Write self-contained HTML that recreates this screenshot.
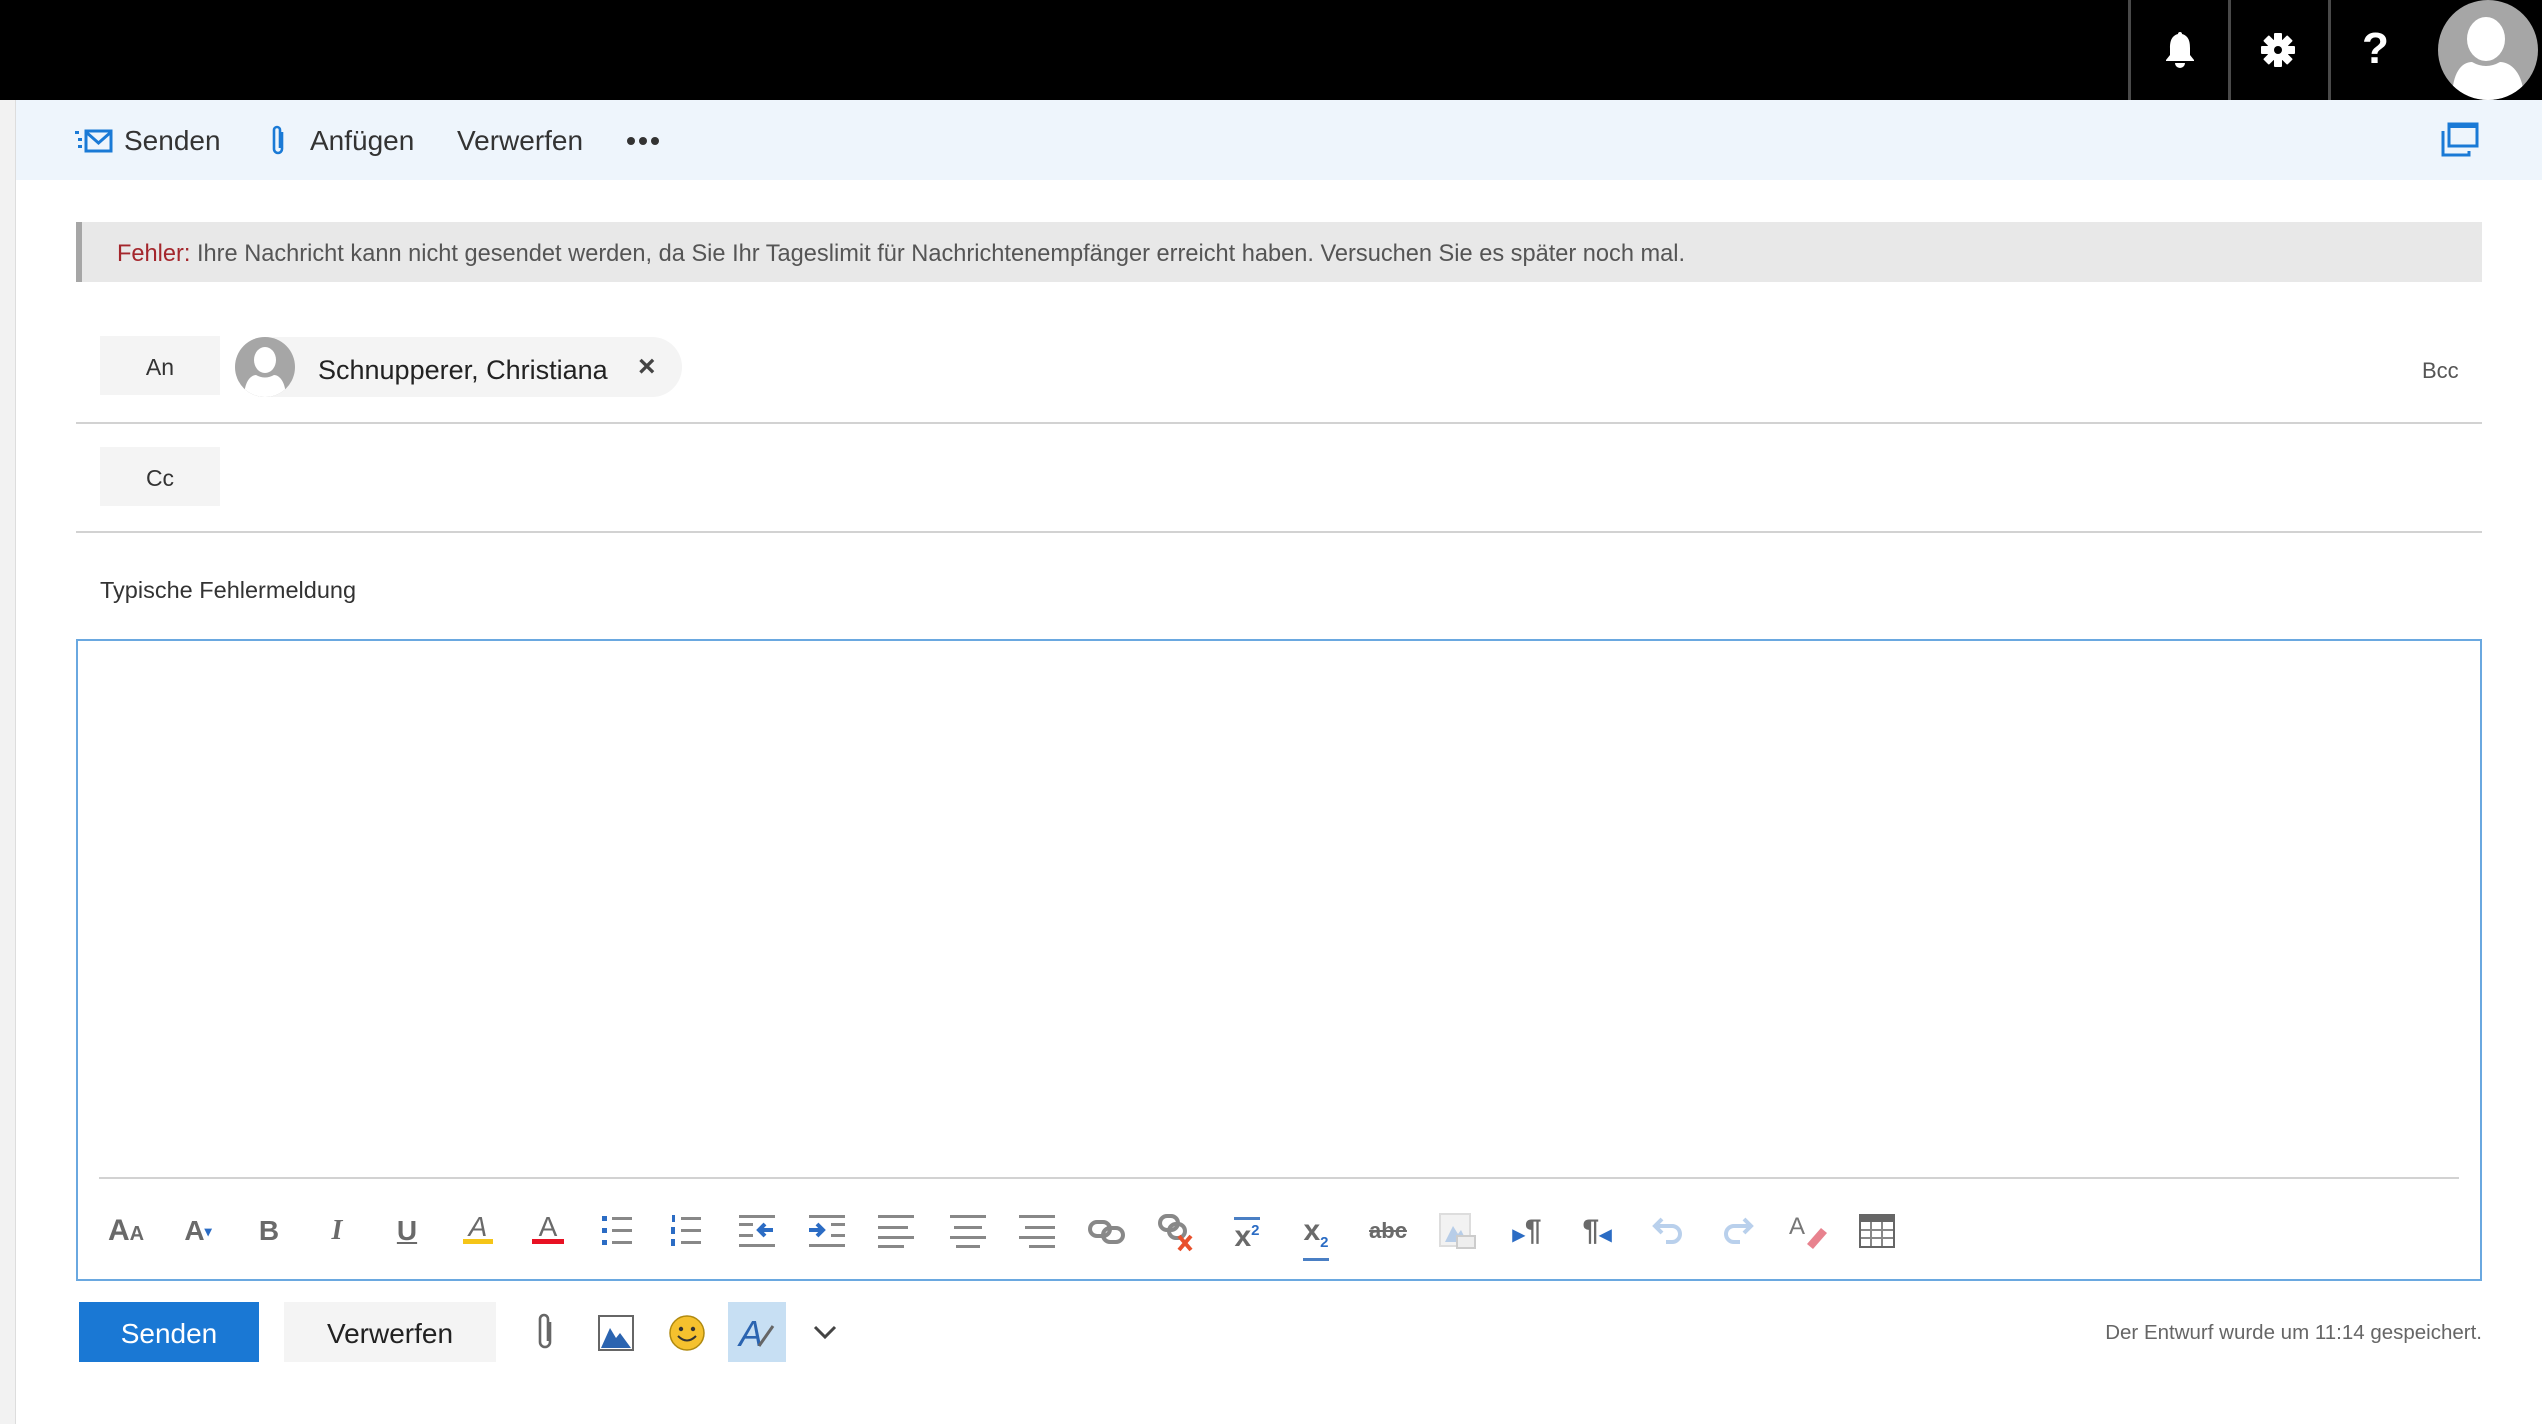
<!DOCTYPE html>
<html><head><meta charset="utf-8"><style>
*{margin:0;padding:0;box-sizing:border-box}
body{width:2542px;height:1424px;position:relative;background:#fff;font-family:"Liberation Sans",sans-serif;color:#333;overflow:hidden}
.a{position:absolute}
.top{left:0;top:0;width:2542px;height:100px;background:#000}
.sep{top:0;width:3px;height:100px;background:#4a4a4a}
.tb{left:16px;top:100px;width:2526px;height:80px;background:#eef5fc}
.side{left:0;top:100px;width:16px;height:1324px;background:#f2f2f2;border-right:1px solid #ddd}
.t{white-space:nowrap}
.line{height:2px;background:#d2d2d2}
.lbl{background:#f4f4f4;font-size:23px;color:#333;display:flex;align-items:center;justify-content:center;padding-top:3px}
.ic{top:1212px;width:40px;height:38px;font-size:28px;color:#6a6a6a;text-align:center;line-height:38px;font-weight:bold}
</style></head><body>
<div class="a top"></div>
<div class="a sep" style="left:2128px"></div>
<div class="a sep" style="left:2228px"></div>
<div class="a sep" style="left:2328px"></div>
<svg class="a" style="left:2162px;top:30px" width="36" height="40" viewBox="0 0 36 40"><path d="M18 2c-1.5 0-2 1-2 2C9 6 8 12 8 18v7l-4 5v1h28v-1l-4-5v-7c0-6-1-12-8-14 0-1-.5-2-2-2z" fill="#fff"/><path d="M13 33a5 5 0 0 0 10 0z" fill="#fff"/></svg>
<svg class="a" style="left:2260px;top:32px" width="36" height="36" viewBox="-18 -18 36 36"><g fill="#fff"><circle r="11"/><rect x="-4" y="-17" width="8" height="34" rx="1"/><rect x="-4" y="-17" width="8" height="34" rx="1" transform="rotate(45)"/><rect x="-4" y="-17" width="8" height="34" rx="1" transform="rotate(90)"/><rect x="-4" y="-17" width="8" height="34" rx="1" transform="rotate(135)"/></g><circle r="4" fill="#000"/></svg>
<div class="a t" style="left:2362px;top:24px;font-size:44px;font-weight:bold;color:#fff">?</div>
<svg class="a" style="left:2438px;top:0" width="100" height="100" viewBox="0 0 100 100"><defs><clipPath id="c"><circle cx="50" cy="50" r="50"/></clipPath></defs><circle cx="50" cy="50" r="50" fill="#a6a6a6"/><g clip-path="url(#c)" fill="#fff"><ellipse cx="48" cy="39" rx="19" ry="22"/><path d="M14 100C14 72 24 62 34 62q14 8 28 0c10 0 24 10 24 38z"/></g></svg>
<div class="a side"></div>
<div class="a tb"></div>
<svg class="a" style="left:75px;top:128px" width="38" height="26" viewBox="0 0 38 26"><g fill="#1a7ad6"><rect x="0" y="3" width="4" height="3"/><rect x="3" y="10" width="4" height="3"/><rect x="3" y="17" width="4" height="3"/></g><rect x="11" y="3" width="25" height="20" fill="none" stroke="#1a7ad6" stroke-width="3"/><path d="M11 4l12.5 11L36 4" fill="none" stroke="#1a7ad6" stroke-width="3"/></svg>
<div class="a t" style="left:124px;top:125px;font-size:28px;color:#333">Senden</div>
<svg class="a" style="left:270px;top:124px" width="16" height="34" viewBox="0 0 16 34"><path d="M12 8v17a4 4 0 0 1-8 0V6a3 3 0 0 1 6 0v18" fill="none" stroke="#1a7ad6" stroke-width="2.6"/></svg>
<div class="a t" style="left:310px;top:125px;font-size:28px;color:#333">Anfügen</div>
<div class="a t" style="left:457px;top:125px;font-size:28px;color:#333">Verwerfen</div>
<svg class="a" style="left:626px;top:135px" width="34" height="12"><circle cx="5" cy="6" r="4" fill="#333"/><circle cx="17" cy="6" r="4" fill="#333"/><circle cx="29" cy="6" r="4" fill="#333"/></svg>
<svg class="a" style="left:2440px;top:122px" width="40" height="36" viewBox="0 0 40 36"><rect x="9" y="2" width="28" height="22" fill="none" stroke="#1a7ad6" stroke-width="3"/><rect x="9" y="1" width="29" height="5" fill="#1a7ad6"/><path d="M3 9v24h26v-4" fill="none" stroke="#1a7ad6" stroke-width="3"/></svg>
<div class="a" style="left:76px;top:222px;width:2406px;height:60px;background:#e8e8e8;border-left:6px solid #a6a6a6"></div>
<div class="a t" style="left:117px;top:241px;font-size:23.6px;color:#555"><span style="color:#a4262c">Fehler:</span> Ihre Nachricht kann nicht gesendet werden, da Sie Ihr Tageslimit für Nachrichtenempfänger erreicht haben. Versuchen Sie es später noch mal.</div>
<div class="a lbl" style="left:100px;top:336px;width:120px;height:59px">An</div>
<div class="a" style="left:235px;top:337px;width:447px;height:60px;background:#f4f4f4;border-radius:30px"></div>
<svg class="a" style="left:235px;top:337px" width="60" height="60" viewBox="0 0 60 60"><defs><clipPath id="d"><circle cx="30" cy="30" r="30"/></clipPath></defs><circle cx="30" cy="30" r="30" fill="#a6a6a6"/><g clip-path="url(#d)" fill="#fff"><ellipse cx="30" cy="23" rx="11" ry="13"/><path d="M9 62C9 44 16 38 21 38q9 5 18 0c5 0 12 6 12 24z"/></g></svg>
<div class="a t" style="left:318px;top:355px;font-size:27px;color:#222">Schnupperer, Christiana</div>
<div class="a t" style="left:638px;top:350px;font-size:30px;color:#444;font-weight:bold">×</div>
<div class="a t" style="left:2422px;top:358px;font-size:22px;color:#555">Bcc</div>
<div class="a line" style="left:76px;top:422px;width:2406px"></div>
<div class="a lbl" style="left:100px;top:447px;width:120px;height:59px">Cc</div>
<div class="a line" style="left:76px;top:531px;width:2406px"></div>
<div class="a t" style="left:100px;top:577px;font-size:23.5px;color:#333">Typische Fehlermeldung</div>
<div class="a" style="left:76px;top:639px;width:2406px;height:642px;border:2px solid #6aa8e0"></div>
<div class="a line" style="left:99px;top:1177px;width:2360px"></div>
<div class="a ic" style="left:106px;font-size:30px">A<span style="font-size:20px">A</span></div>
<div class="a ic" style="left:178px">A<span style="font-size:14px;color:#2b6cc4;vertical-align:top">▾</span></div>
<div class="a ic" style="left:249px">B</div>
<div class="a ic" style="left:317px;font-style:italic;font-family:'Liberation Serif',serif">I</div>
<div class="a ic" style="left:387px;text-decoration:underline">U</div>
<div class="a ic" style="left:458px;font-style:italic;font-weight:normal;border-bottom:5px solid #f5c518;height:32px;line-height:30px;width:30px;margin-left:5px">A</div>
<div class="a ic" style="left:528px;font-weight:normal;border-bottom:5px solid #e81123;height:32px;line-height:30px;width:32px;margin-left:4px">A</div>
<svg class="a" style="left:598px;top:1212px" width="40" height="38"><g fill="#2b6cc4"><rect x="4" y="4" width="5" height="5"/><rect x="4" y="16" width="5" height="5"/><rect x="4" y="28" width="5" height="5"/></g><g fill="#888"><rect x="14" y="5" width="20" height="3"/><rect x="14" y="17" width="20" height="3"/><rect x="14" y="29" width="20" height="3"/></g></svg>
<svg class="a" style="left:667px;top:1212px" width="40" height="38"><g fill="#2b6cc4"><rect x="5" y="3" width="3" height="7"/><rect x="4" y="15" width="4" height="7"/><rect x="4" y="27" width="4" height="7"/></g><g fill="#888"><rect x="14" y="5" width="20" height="3"/><rect x="14" y="17" width="20" height="3"/><rect x="14" y="29" width="20" height="3"/></g></svg>
<svg class="a" style="left:737px;top:1212px" width="40" height="38"><g fill="#888"><rect x="2" y="3" width="36" height="3"/><rect x="2" y="11" width="14" height="3"/><rect x="2" y="22" width="14" height="3"/><rect x="2" y="32" width="36" height="3"/></g><path d="M36 18H22M28 12l-6 6 6 6" stroke="#2b6cc4" stroke-width="4" fill="none"/></svg>
<svg class="a" style="left:807px;top:1212px" width="40" height="38"><g fill="#888"><rect x="2" y="3" width="36" height="3"/><rect x="24" y="11" width="14" height="3"/><rect x="24" y="22" width="14" height="3"/><rect x="2" y="32" width="36" height="3"/></g><path d="M2 18h14M10 12l6 6-6 6" stroke="#2b6cc4" stroke-width="4" fill="none"/></svg>
<svg class="a" style="left:876px;top:1212px" width="40" height="38"><g fill="#888"><rect x="2" y="3" width="36" height="3"/><rect x="2" y="14" width="30" height="3"/><rect x="2" y="24" width="36" height="3"/><rect x="2" y="33" width="26" height="3"/></g></svg>
<svg class="a" style="left:948px;top:1212px" width="40" height="38"><g fill="#888"><rect x="2" y="3" width="36" height="3"/><rect x="6" y="14" width="28" height="3"/><rect x="2" y="24" width="36" height="3"/><rect x="8" y="33" width="24" height="3"/></g></svg>
<svg class="a" style="left:1017px;top:1212px" width="40" height="38"><g fill="#888"><rect x="2" y="3" width="36" height="3"/><rect x="8" y="14" width="30" height="3"/><rect x="2" y="24" width="36" height="3"/><rect x="12" y="33" width="26" height="3"/></g></svg>
<svg class="a" style="left:1087px;top:1212px" width="40" height="38"><g fill="none" stroke="#888" stroke-width="4"><rect x="3" y="10" width="20" height="14" rx="7"/><rect x="16" y="16" width="20" height="14" rx="7"/></g></svg>
<svg class="a" style="left:1157px;top:1212px" width="40" height="40"><g fill="none" stroke="#888" stroke-width="4"><rect x="3" y="4" width="18" height="14" rx="7"/><rect x="12" y="12" width="16" height="14" rx="7"/></g><path d="M22 24l12 14M34 24L22 38" stroke="#e8502c" stroke-width="4"/></svg>
<div class="a ic" style="left:1227px;font-size:30px"><span style="border-top:3px solid #4a7fc4">x<sup style="font-size:15px;color:#2b6cc4">2</sup></span></div>
<div class="a ic" style="left:1296px;font-size:30px"><span style="border-bottom:3px solid #4a7fc4;line-height:30px;display:inline-block">x<sub style="font-size:15px;color:#2b6cc4">2</sub></span></div>
<div class="a ic" style="left:1368px;font-size:22px;text-decoration:line-through">abc</div>
<svg class="a" style="left:1437px;top:1212px" width="40" height="38"><rect x="3" y="2" width="30" height="32" fill="#f2f2f2" stroke="#ddd" stroke-width="2"/><path d="M8 30l8-16 5 8 3-4 6 12z" fill="#b7cde8"/><rect x="20" y="24" width="18" height="12" fill="#eee" stroke="#ccc" stroke-width="2"/></svg>
<div class="a ic" style="left:1507px;font-size:30px"><span style="color:#2b6cc4;font-size:16px">▶</span>¶</div>
<div class="a ic" style="left:1577px;font-size:30px">¶<span style="color:#2b6cc4;font-size:16px">◀</span></div>
<svg class="a" style="left:1648px;top:1212px" width="40" height="38"><path d="M8 14h16a8 8 0 0 1 0 16h-6M14 7l-7 7 7 7" fill="none" stroke="#b9d0ec" stroke-width="4"/></svg>
<svg class="a" style="left:1718px;top:1212px" width="40" height="38"><path d="M32 14H16a8 8 0 0 0 0 16h6M26 7l7 7-7 7" fill="none" stroke="#b9d0ec" stroke-width="4"/></svg>
<svg class="a" style="left:1787px;top:1210px" width="40" height="40"><text x="2" y="24" font-family="Liberation Sans" font-size="24" fill="#777">A</text><path d="M20 34l14-16 6 5-14 16z" fill="#e8828e"/></svg>
<svg class="a" style="left:1857px;top:1212px" width="40" height="38"><rect x="3" y="3" width="34" height="32" fill="#fff" stroke="#666" stroke-width="2"/><rect x="3" y="3" width="34" height="7" fill="#666"/><g stroke="#888" stroke-width="2"><path d="M4 18h32M4 26h32M14 10v24M25 10v24"/></g></svg>
<div class="a" style="left:79px;top:1302px;width:180px;height:60px;background:#1a78d4;color:#fff;font-size:28px;display:flex;align-items:center;justify-content:center;padding-top:3px">Senden</div>
<div class="a" style="left:284px;top:1302px;width:212px;height:60px;background:#f4f4f4;color:#222;font-size:28px;display:flex;align-items:center;justify-content:center;padding-top:3px">Verwerfen</div>
<svg class="a" style="left:533px;top:1312px" width="24" height="42" viewBox="0 0 24 42"><path d="M17 10v20a5 5 0 0 1-10 0V7a4 4 0 0 1 8 0v22" fill="none" stroke="#666" stroke-width="2.6"/></svg>
<svg class="a" style="left:597px;top:1314px" width="38" height="38"><rect x="2" y="2" width="34" height="34" fill="#fff" stroke="#666" stroke-width="2"/><path d="M4 34l9-20 6 10 4-5 11 15z" fill="#2b64b0"/></svg>
<svg class="a" style="left:667px;top:1313px" width="40" height="40"><circle cx="20" cy="20" r="17" fill="#f5c12e" stroke="#b08a10" stroke-width="1.5"/><circle cx="14" cy="16" r="2.2" fill="#333"/><circle cx="26" cy="16" r="2.2" fill="#333"/><path d="M11 23q9 9 18 0" fill="none" stroke="#333" stroke-width="2"/></svg>
<div class="a" style="left:728px;top:1302px;width:58px;height:60px;background:#c7dff3"></div>
<svg class="a" style="left:737px;top:1312px" width="40" height="42"><text x="2" y="34" font-family="Liberation Sans" font-style="italic" font-size="36" fill="#2b64b0">A</text><path d="M22 34l14-20" stroke="#666" stroke-width="3"/></svg>
<svg class="a" style="left:813px;top:1325px" width="24" height="16"><path d="M2 2l10 10 10-10" fill="none" stroke="#444" stroke-width="3"/></svg>
<div class="a t" style="right:60px;top:1321px;font-size:20.5px;color:#666">Der Entwurf wurde um 11:14 gespeichert.</div>
</body></html>
